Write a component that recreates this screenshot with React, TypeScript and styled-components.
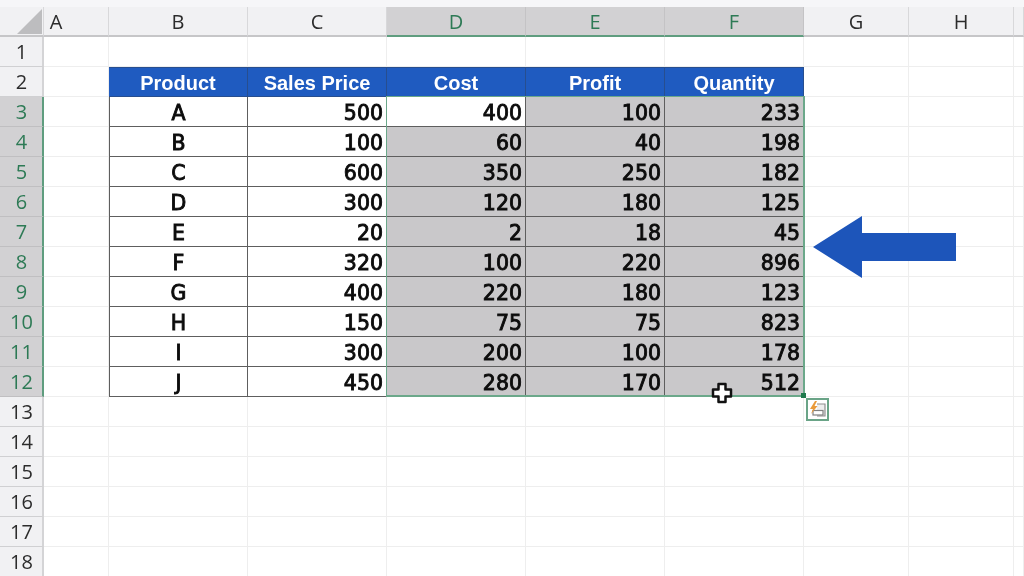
import React from "react";
import styled, { createGlobalStyle } from "styled-components";

const Global = createGlobalStyle`
  html, body { margin: 0; padding: 0; background: #fff; overflow: hidden; }
  #root { width: 1024px; height: 576px; }
`;

const Page = styled.div`
  position: relative;
  width: 1024px;
  height: 576px;
  overflow: hidden;
  background: #fff;
  display: flex;
  flex-direction: column;
  filter: blur(0.35px);
`;
const TopBand = styled.div`
  height: 7px;
  flex: none;
  background: #f6f6f8;
`;
const Sheet = styled.div`
  display: grid;
  grid-template-columns: 44px 65px repeat(5, 139px) 105px 105px 1fr;
  grid-template-rows: repeat(19, 30px);
  flex: none;
`;
const Corner = styled.div`
  background: #f1f1f3;
  border-right: 1px solid #d8d8da;
  border-bottom: 2px solid #c6c6c8;
  position: relative;
  box-sizing: border-box;
  &::after {
    content: "";
    position: absolute;
    right: 1px;
    bottom: 1px;
    width: 0;
    height: 0;
    border-style: solid;
    border-width: 0 0 25px 25px;
    border-color: transparent transparent #bdbdbf transparent;
  }
`;
const ColHead = styled.div<{ $on?: boolean; $nudged?: boolean }>`
  box-sizing: border-box;
  display: flex;
  align-items: center;
  justify-content: center;
  padding-right: ${(p) => (p.$nudged ? "40px" : "0")};
  font: 400 20px "Open Sans", "Noto Sans", sans-serif;
  color: ${(p) => (p.$on ? "#2d7a55" : "#2c2c2c")};
  background: ${(p) => (p.$on ? "#d2d1d3" : "#f1f1f3")};
  border-right: 1px solid ${(p) => (p.$on ? "#c4c3c5" : "#d8d8da")};
  border-bottom: 2px solid ${(p) => (p.$on ? "#5f9d7f" : "#c6c6c8")};
`;
const RowHead = styled.div<{ $on?: boolean }>`
  box-sizing: border-box;
  display: flex;
  align-items: center;
  justify-content: center;
  padding-left: 1px;
  font: 400 20px "Open Sans", "Noto Sans", sans-serif;
  color: ${(p) => (p.$on ? "#2d7a55" : "#2c2c2c")};
  background: ${(p) => (p.$on ? "#d2d1d3" : "#f1f1f3")};
  border-right: 2px solid ${(p) => (p.$on ? "#5f9d7f" : "#d4d4d6")};
  border-bottom: 1px solid ${(p) => (p.$on ? "#c0bfc1" : "#d0d0d2")};
`;
const Blank = styled.div`
  box-sizing: border-box;
  border-right: 1px solid #eeeeee;
  border-bottom: 1px solid #eeeeee;
`;
const Title = styled.div`
  box-sizing: border-box;
  display: flex;
  align-items: center;
  justify-content: center;
  padding-top: 2px;
  background: #1f5bc0;
  color: #fff;
  font: 700 20px "Liberation Sans", Arial, sans-serif;
  border-top: 1px solid #274e8f;
  border-bottom: 1px solid #274e8f;
  border-right: 1px solid #274e8f;
`;
const Cell = styled.div<{ $center?: boolean; $sel?: boolean; $first?: boolean }>`
  box-sizing: border-box;
  display: flex;
  align-items: center;
  justify-content: ${(p) => (p.$center ? "center" : "flex-end")};
  padding-right: ${(p) => (p.$center ? "0" : "3px")};
  padding-top: 2px;
  background: ${(p) => (p.$sel ? "#c9c8ca" : "#fff")};
  color: #0c0c0c;
  font: 400 20.5px "DejaVu Sans", sans-serif;
  -webkit-text-stroke: 0.9px #0c0c0c;
  border-bottom: 1px solid #5e5e5e;
  border-right: 1px solid #5e5e5e;
  border-left: ${(p) => (p.$first ? "1px solid #5e5e5e" : "none")};
`;
const Selection = styled.div`
  position: absolute;
  left: 386px;
  top: 96px;
  width: 419px;
  height: 301px;
  box-sizing: border-box;
  border-style: solid;
  border-color: #6ba88a;
  border-width: 1px 2px 2px 1px;
  pointer-events: none;
`;
const Arrow = styled.svg`
  position: absolute;
  left: 813px;
  top: 216px;
`;
const Plus = styled.svg`
  position: absolute;
  left: 711px;
  top: 382px;
`;
const Handle = styled.div`
  position: absolute;
  left: 801px;
  top: 393px;
  width: 5px;
  height: 5px;
  background: #1f7a4d;
`;
const PasteBox = styled.div`
  position: absolute;
  left: 806px;
  top: 398px;
  width: 23px;
  height: 23px;
  box-sizing: border-box;
  border: 2px solid #6aa487;
  background: #fff;
  display: flex;
  align-items: center;
  justify-content: center;
`;

const cols = ["A", "B", "C", "D", "E", "F", "G", "H"];
const selCols = ["D", "E", "F"];
const titles = ["Product", "Sales Price", "Cost", "Profit", "Quantity"];
const rows: [string, number, number, number, number][] = [
  ["A", 500, 400, 100, 233],
  ["B", 100, 60, 40, 198],
  ["C", 600, 350, 250, 182],
  ["D", 300, 120, 180, 125],
  ["E", 20, 2, 18, 45],
  ["F", 320, 100, 220, 896],
  ["G", 400, 220, 180, 123],
  ["H", 150, 75, 75, 823],
  ["I", 300, 200, 100, 178],
  ["J", 450, 280, 170, 512],
];

export default function App() {
  return (
    <Page>
      <Global />
      <TopBand />
      <Sheet>
        <Corner />
        {cols.map((c) => (
          <ColHead key={c} $on={selCols.includes(c)} $nudged={c === "A"}>{c}</ColHead>
        ))}
        <ColHead />
        {Array.from({ length: 18 }, (_, i) => {
          const n = i + 1;
          const on = n >= 3 && n <= 12;
          const rowCells: React.ReactNode[] = [];
          rowCells.push(<RowHead key={`h${n}`} $on={on}>{n}</RowHead>);
          rowCells.push(<Blank key={`a${n}`} />);
          if (n === 2) {
            titles.forEach((t) => rowCells.push(<Title key={t}>{t}</Title>));
          } else if (on) {
            rows[n - 3].forEach((v, k) => {
              const sel = k >= 2 && !(n === 3 && k === 2);
              rowCells.push(
                <Cell key={k} $center={k === 0} $first={k === 0} $sel={sel}>
                  {v}
                </Cell>
              );
            });
          } else {
            for (let k = 0; k < 5; k++) rowCells.push(<Blank key={k} />);
          }
          rowCells.push(<Blank key={`g${n}`} />, <Blank key={`i${n}`} />, <Blank key={`j${n}`} />);
          return <React.Fragment key={n}>{rowCells}</React.Fragment>;
        })}
      </Sheet>
      <Selection />
      <Arrow width="144" height="64" viewBox="0 0 144 64">
        <path d="M0 31 L49 0 L49 17 L143 17 L143 45 L49 45 L49 62 Z" fill="#1d55ba" />
      </Arrow>
      <Plus width="22" height="22" viewBox="0 0 22 22">
        <path d="M7.500 2h7v5.500h5.500v7h-5.500V20h-7v-5.500H2v-7h5.500z" fill="#fff" stroke="#111" strokeWidth="2.500" strokeLinejoin="round" />
      </Plus>
      <Handle />
      <PasteBox>
        <svg width="18" height="18" viewBox="0 0 18 18">
          <path d="M8 3h8v12H8" fill="#eeeeee" stroke="#909090" strokeWidth="1.200" />
          <rect x="4" y="9.500" width="10" height="4.500" fill="#fff" stroke="#808080" strokeWidth="1.200" />
          <path d="M6 0 L1 8 L4 8 L2 13 L8.500 5 L5.500 5 L8 0 Z" fill="#ea9a3a" />
        </svg>
      </PasteBox>
    </Page>
  );
}
